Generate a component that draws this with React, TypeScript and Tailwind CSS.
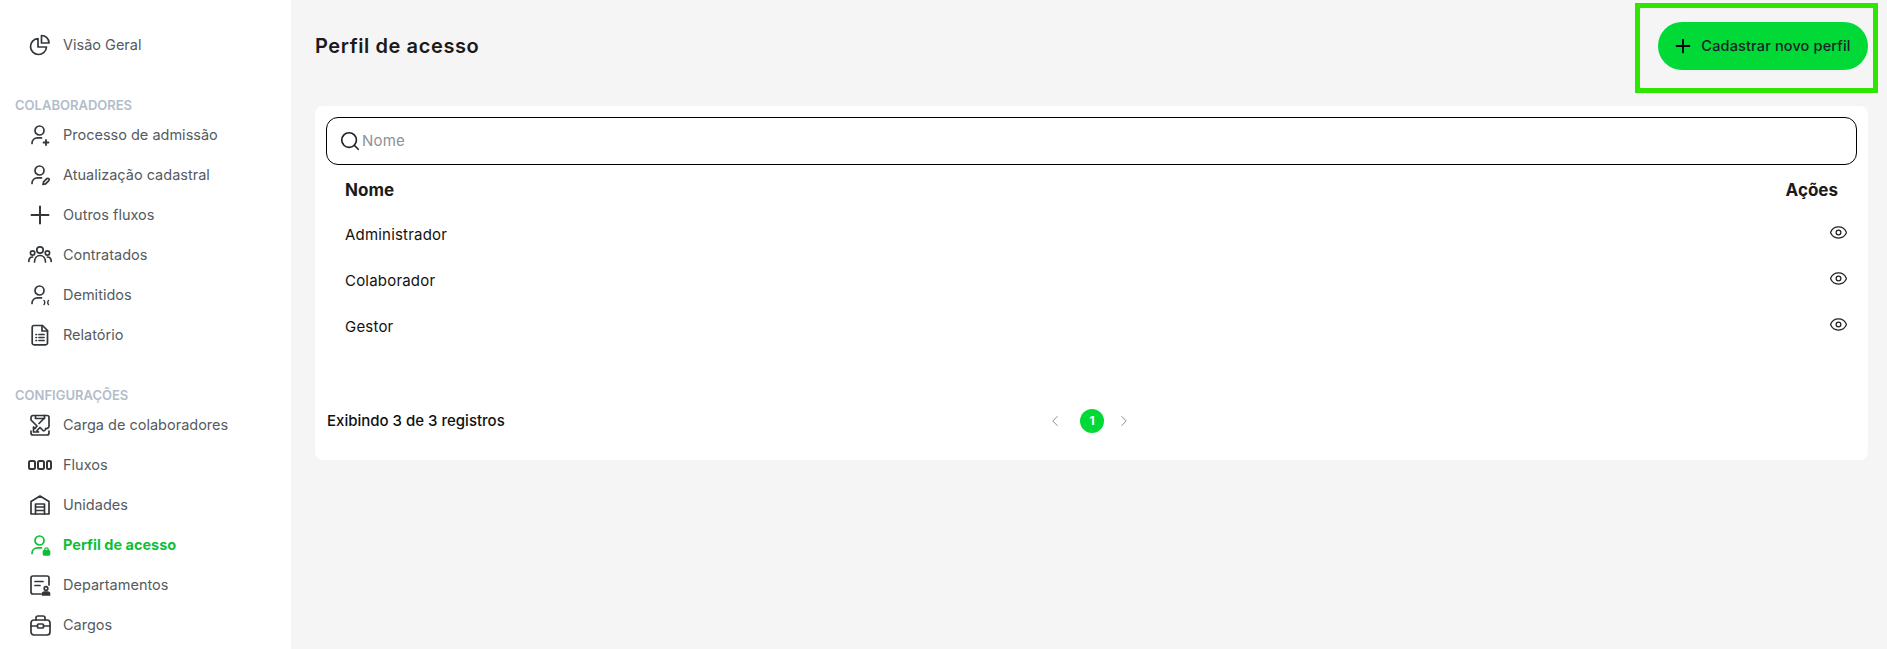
// Perfil de acesso page
import { ChevronLeft, ChevronRight, Eye, Plus, Search } from "lucide-react";
import type { ReactNode } from "react";

const font = { fontFamily: "Inter, 'Noto Sans', sans-serif" };

function Svg({ children }: { children: ReactNode }) {
  return (
    <svg width="24" height="24" viewBox="0 0 24 24" fill="none" stroke="currentColor" strokeWidth="1.7" strokeLinecap="round" strokeLinejoin="round" className="shrink-0">
      {children}
    </svg>
  );
}

// person with a small badge glyph at the lower right
function Person({ children }: { children?: ReactNode }) {
  return (
    <Svg>
      <circle cx="11.5" cy="7.5" r="4.5" />
      <path d="M4 20.5c0-3.6 2.6-5.6 5.5-5.6h4" />
      {children}
    </Svg>
  );
}

const icons = {
  pie: (
    <Svg>
      <path d="M10 5.5a8 8 0 1 0 8.5 8.5H10z" />
      <path d="M13.5 2.5v7.5H21a7.5 7.5 0 0 0-7.5-7.5z" />
    </Svg>
  ),
  userPlus: (
    <Person>
      <path d="M18 17v5M15.5 19.5h5" strokeWidth="1.8" />
    </Person>
  ),
  userEdit: (
    <Person>
      <path d="M15 21.5l.6-2.6 3.2-3.2a1.3 1.3 0 0 1 2 2l-3.2 3.2z" />
    </Person>
  ),
  plus: (
    <Svg>
      <path d="M12 3.5v17M3.5 12h17" strokeWidth="2" />
    </Svg>
  ),
  users: (
    <Svg>
      <circle cx="12" cy="7" r="3.2" />
      <circle cx="4.6" cy="10" r="2.2" />
      <circle cx="19.4" cy="10" r="2.2" />
      <path d="M6.5 19c0-4 2.4-6.5 5.5-6.5s5.500 2.500 5.500 6.500" />
      <path d="M.8 18.500c0-2.500 1.300-4.500 3.800-4.500M23.200 18.500c0-2.500-1.300-4.500-3.800-4.500" />
    </Svg>
  ),
  userX: (
    <Person>
      <path d="M16 17.500c1 .8 1 3 0 4M20.500 17.500c-1 .8-1 3 0 4" strokeWidth="1.4" />
    </Person>
  ),
  report: (
    <Svg>
      <path d="M6 2.500h8.500l5 5V20a1.800 1.800 0 0 1-1.800 1.800H6A1.800 1.800 0 0 1 4.200 20V4.300A1.800 1.800 0 0 1 6 2.500z" />
      <path d="M14 2.500v5.500h5.500" />
      <path d="M11 11.500h5M11 14.500h5M11 17.500h5M8 11.500h.5M8 14.500h.5M8 17.500h.5" />
    </Svg>
  ),
  upload: (
    <Svg>
      <path d="M7 2.500H5a2 2 0 0 0-2 2v2.500l6 6-2 2.500-1.500-1.500v5h5l-1.500-1.500 3-3 3 3c1.500 1 3-1 2.500-2 2 .5 3.500-1 3.500-2.500V4.500a2 2 0 0 0-2-2h-3" />
      <path d="M3 18v2a2 2 0 0 0 2 2h14a2 2 0 0 0 2-2v-2" />
      <path d="M7.500 2.500h9v3h-9zM16 5.500l-5 5" />
    </Svg>
  ),
  flows: (
    <Svg>
      <rect x="1" y="8" width="6" height="8" rx="1.500" strokeWidth="2" />
      <rect x="10" y="8" width="6" height="8" rx="1.500" strokeWidth="2" />
      <rect x="19" y="8" width="4" height="8" rx="1.500" strokeWidth="2" />
    </Svg>
  ),
  warehouse: (
    <Svg>
      <path d="M3 21V8.500L12 3l9 5.500V21z" />
      <path d="M7.500 21v-10h9v10M7.500 14h9M7.500 17.500h9" />
    </Svg>
  ),
  userLock: (
    <Person>
      <rect x="15.500" y="17.500" width="6" height="4.500" rx="1" fill="currentColor" />
      <path d="M16.800 17.500v-1a1.700 1.700 0 0 1 3.400 0v1" strokeWidth="1.300" />
    </Person>
  ),
  department: (
    <Svg>
      <path d="M13 21H5a2 2 0 0 1-2-2V5a2 2 0 0 1 2-2h14a2 2 0 0 1 2 2v7" />
      <path d="M7 8.500h8M7 12.500h5" />
      <circle cx="18" cy="15.500" r="1.800" />
      <path d="M14.500 22v-1a2 2 0 0 1 2-2h3a2 2 0 0 1 2 2v1z" fill="currentColor" />
    </Svg>
  ),
  briefcase: (
    <Svg>
      <rect x="3" y="7" width="19" height="15" rx="3" />
      <path d="M8 7V5a2 2 0 0 1 2-2h5a2 2 0 0 1 2 2v2M3 13h6.500M15.500 13H22" />
      <rect x="9.500" y="11" width="6" height="4" rx="1" />
    </Svg>
  ),
};

type IconName = keyof typeof icons;

function NavItem({ icon, label, active }: { icon: IconName; label: string; active?: boolean }) {
  return (
    <div className={`flex h-10 items-center gap-[14px] pl-[30px] text-[14.5px] ${active ? "font-bold text-[#0ebf35]" : "text-[#555b5f]"}`}>
      <span className={`flex w-[19px] justify-center ${active ? "" : "text-[#33373a]"}`}>{icons[icon]}</span>
      <span>{label}</span>
    </div>
  );
}

function SectionTitle({ children }: { children: string }) {
  return <div className="pl-[15px] text-[13px] font-semibold leading-5 text-[#b3bcc9]">{children}</div>;
}

function Sidebar() {
  return (
    <aside className="flex w-[291px] shrink-0 flex-col bg-white pt-[25px]">
      <NavItem icon="pie" label="Visão Geral" />
      <div className="mt-[30px]">
        <SectionTitle>COLABORADORES</SectionTitle>
        <NavItem icon="userPlus" label="Processo de admissão" />
        <NavItem icon="userEdit" label="Atualização cadastral" />
        <NavItem icon="plus" label="Outros fluxos" />
        <NavItem icon="users" label="Contratados" />
        <NavItem icon="userX" label="Demitidos" />
        <NavItem icon="report" label="Relatório" />
      </div>
      <div className="mt-[30px]">
        <SectionTitle>CONFIGURAÇÕES</SectionTitle>
        <NavItem icon="upload" label="Carga de colaboradores" />
        <NavItem icon="flows" label="Fluxos" />
        <NavItem icon="warehouse" label="Unidades" />
        <NavItem icon="userLock" label="Perfil de acesso" active />
        <NavItem icon="department" label="Departamentos" />
        <NavItem icon="briefcase" label="Cargos" />
      </div>
    </aside>
  );
}

function Row({ name }: { name: string }) {
  return (
    <div className="flex h-[46px] items-center justify-between pr-[9px] pl-[19px] text-[15px] tracking-[0.2px] text-[#111]">
      <span>{name}</span>
      <Eye size={19} strokeWidth={1.6} className="-mt-[6px] text-[#222]" />
    </div>
  );
}

export default function App() {
  return (
    <div className="flex h-screen overflow-hidden bg-[#f5f5f5]" style={font}>
      <Sidebar />
      <main className="flex-1 pt-[22px] pr-[19px] pl-6">
        {/* Page title */}
        <header className="flex h-12 items-center justify-between">
          <h1 className="text-[20px] font-semibold tracking-[0.6px] text-[#1a1a1a]">Perfil de acesso</h1>
          <div className="relative">
            <button className="flex h-12 w-[210px] items-center justify-center gap-[7px] rounded-full bg-[#00d936] pr-[3px] text-[14.5px] font-medium tracking-[0.15px] text-[#1e1e2a]">
              <Plus size={22} strokeWidth={2} className="text-black" />
              Cadastrar novo perfil
            </button>
            {/* highlight frame */}
            <div className="absolute -top-[19px] -right-[10px] -bottom-[23px] -left-[23px] border-[5px] border-[#2ee600]" />
          </div>
        </header>

        <section className="mt-9 h-[354px] rounded-lg bg-white px-[11px] pt-[11px]">
          <div className="flex h-12 items-center gap-[1px] rounded-xl border border-black pl-[12px]">
            <Search size={22} strokeWidth={1.8} className="text-[#222]" />
            <span className="text-[15px] tracking-[0.2px] text-[#8d9299]">Nome</span>
          </div>
          <div className="flex h-[52px] items-center justify-between px-[19px] text-[17px] font-bold text-[#1a1a1a]">
            <span>Nome</span>
            <span>Ações</span>
          </div>
          <div className="-mt-[5px]">
            <Row name="Administrador" />
            <Row name="Colaborador" />
            <Row name="Gestor" />
          </div>

          {/* Pagination */}
          <div className="relative mt-[59px] flex h-6 items-center pl-[1px] text-[15px] font-medium text-[#111]">
            <span>Exibindo 3 de 3 registros</span>
            <div className="absolute top-0 left-[720px] flex items-center">
              <ChevronLeft size={18} strokeWidth={1.3} className="text-[#888]" />
              <span className="ml-4 flex h-6 w-6 items-center justify-center rounded-full bg-[#00d936] text-[12px] font-bold text-white">1</span>
              <ChevronRight size={18} strokeWidth={1.3} className="ml-[11px] text-[#888]" />
            </div>
          </div>
        </section>
      </main>
    </div>
  );
}
